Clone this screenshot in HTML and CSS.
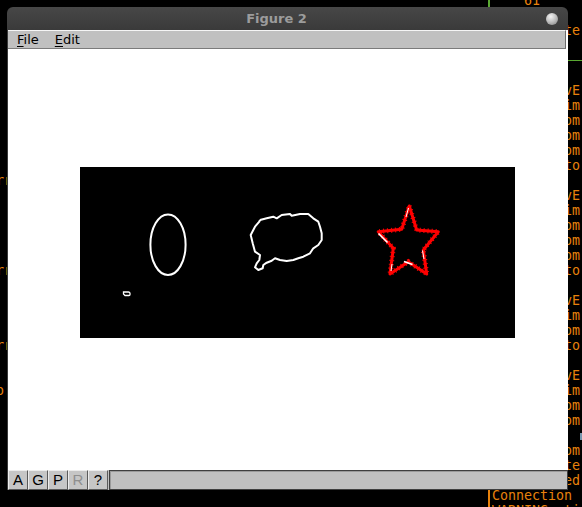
FILE: index.html
```html
<!DOCTYPE html>
<html>
<head>
<meta charset="utf-8">
<link rel="stylesheet" href="styles.css">
</head>
<body>
<div class="desktop">
  <div class="terminal">
<pre class="pane pane-left">












rror: bad frame





rr  missing key




rr  skipped


o: done







</pre>
    <div class="divider"><span class="divider-active"></span><span class="divider-rest"></span></div>
<pre class="pane pane-right">    61

Elapsed: te 0.42s

<span class="rule">────────────────────────────────</span>

 Running vE mode
  loaded im #1
  read from image
  copy from buffer
  load from disk
  output to window

 Running vE mode
  loaded im #2
  read from image
  copy from buffer
  load from disk
  output to window

 Running vE mode
  loaded im #3
  read from image
  output to window

 Running vE mode
  loaded im #4
  read from image
  copy from buffer
           <span class="cursor-mark"></span>
  load from disk
Elapsed: te 0.40s
   Finished
Connection refused
WARNING: timeout
</pre>
  </div>

  <div class="window">
    <div class="titlebar">
      <span class="title">Figure 2</span>
      <span class="close"></span>
    </div>
    <div class="window-body">
      <div class="menubar">
        <span class="menu-item"><u>F</u>ile</span>
        <span class="menu-item"><u>E</u>dit</span>
      </div>
      <div class="canvas">
        <svg class="figure" width="435" height="171" viewBox="0 0 435 171">
          <rect width="435" height="171" fill="#000"/>
          <ellipse cx="88" cy="77.7" rx="17.6" ry="30.3" fill="none" stroke="#fff" stroke-width="2"/>
          <path d="M43.5 125 h5 a1.5 1.5 0 0 1 1.5 1.5 v1 a1 1 0 0 1 -1 1 h-4 l-1.5 -1.5 z" fill="none" stroke="#fff" stroke-width="1.3"/>
          <polyline fill="none" stroke="#fff" stroke-width="2" stroke-linejoin="round" points="180,53 186.7,51.3 193.3,49.7 196.7,51.3 201.7,48 210,47 211.7,48.7 220,47 228.3,47 233.3,51.3 238.3,54.7 240,59.7 241.7,66.3 241.7,73 238.3,78 233.3,81.3 230,86.3 223.3,89.7 218.3,91.3 213.3,93 206.7,94 200,93 195,91.3 191.7,93.7 186.7,95.7 183.3,98 182.7,101.3 178.3,103 175,100.3 176.7,96.3 179.3,93 180,88 175,84.7 172.7,76.3 170.7,68 173.3,63 175,59.7 179.3,54.7 180,53"/>
          <polygon fill="none" stroke="#ff0000" stroke-width="3" stroke-linejoin="round" points="329.3,39 336.7,63 358.3,64.7 343.3,83 346.7,107 328.3,94.7 310,107 313.3,81.3 298.3,64.7 321.7,62.3"/>
          <polygon fill="none" stroke="#ff0000" stroke-width="5" stroke-dasharray="1 3" points="329.3,39 336.7,63 358.3,64.7 343.3,83 346.7,107 328.3,94.7 310,107 313.3,81.3 298.3,64.7 321.7,62.3"/>
          <line x1="298.5" y1="66.5" x2="307.5" y2="75.5" stroke="#fff" stroke-width="1.6"/>
          <line x1="324" y1="94.5" x2="332.5" y2="97.5" stroke="#fff" stroke-width="1.6"/>
          <line x1="328.5" y1="41" x2="326" y2="50" stroke="#fff" stroke-width="1"/>
          <line x1="342.5" y1="83.5" x2="344" y2="92" stroke="#fff" stroke-width="1"/>
          <line x1="311" y1="104" x2="312" y2="97" stroke="#fff" stroke-width="1"/>
        </svg>
      </div>
      <div class="toolbar">
        <span class="tbtn">A</span>
        <span class="tbtn">G</span>
        <span class="tbtn">P</span>
        <span class="tbtn disabled">R</span>
        <span class="tbtn">?</span>
        <span class="status"></span>
      </div>
    </div>
  </div>
</div>
</body>
</html>
```
FILE: styles.css
```css
* {
  box-sizing: border-box;
}

html,
body {
  margin: 0;
  width: 582px;
  height: 507px;
  overflow: hidden;
  background: #000;
}

.desktop {
  position: relative;
  width: 582px;
  height: 507px;
  overflow: hidden;
  background: #000;
}

/* terminal behind the window */
.terminal {
  display: flex;
  height: 520px;
  margin-top: -7px;
  margin-left: -4px;
  font-family: "DejaVu Sans Mono", monospace;
  font-size: 13.3px;
  line-height: 15px;
  color: #e8820c;
}

.pane {
  margin: 0;
  font: inherit;
  white-space: pre;
  overflow: hidden;
}

.pane-left {
  flex: none;
  width: 488px;
}

.divider {
  flex: none;
  width: 8px;
  display: flex;
  flex-direction: column;
  padding-left: 4px;
}

.divider-active {
  width: 2px;
  height: 497px;
  background: #5aa832;
}

.divider-rest {
  width: 2px;
  flex: 1;
  background: #e8820c;
}

.pane-right {
  flex: 1;
}

.rule {
  color: #5aa832;
}

.cursor-mark {
  display: inline-block;
  width: 2px;
  height: 7px;
  background: #7896ae;
}

/* the figure window */
.window {
  position: absolute;
  left: 7px;
  top: 7px;
  width: 561px;
  display: flex;
  flex-direction: column;
}

.titlebar {
  position: relative;
  height: 23px;
  border-radius: 6px 6px 0 0;
  background: linear-gradient(#474747, #3a3a3a);
  display: flex;
  align-items: center;
  justify-content: center;
  padding-right: 22px;
  font: bold 13px/23px "DejaVu Sans", sans-serif;
  color: #9c9c9c;
}

.close {
  position: absolute;
  right: 10px;
  top: 6px;
  width: 12px;
  height: 12px;
  border-radius: 50%;
  background: radial-gradient(circle at 40% 30%, #f4f4f4, #bdbdbd 50%, #7a7a7a);
}

.window-body {
  display: flex;
  flex-direction: column;
  border-left: 1px solid #3a3a3a;
  background: #fff;
}

.menubar {
  height: 19px;
  margin-right: 2px;
  display: flex;
  padding-left: 1px;
  background: #c0c0c0;
  border-top: 1px solid #f5f5f5;
  border-bottom: 1px solid #7b7b7b;
  border-right: 1px solid #6e6e6e;
  font: 13px/17px "DejaVu Sans", sans-serif;
  color: #000;
}

.menu-item {
  padding: 0 8px;
}

.menu-item u {
  text-underline-offset: 2px;
  text-decoration-thickness: 1px;
}

.canvas {
  height: 421px;
  padding: 118px 0 0 72px;
  background: #fff;
}

.figure {
  display: block;
}

.toolbar {
  height: 20px;
  display: flex;
  background: #c0c0c0;
}

.tbtn {
  flex: none;
  width: 20px;
  height: 20px;
  background: #c6c6c6;
  border: 1px solid;
  border-color: #ececec #5a5a5a #5a5a5a #ececec;
  font: 15px/18px "Liberation Sans", sans-serif;
  text-align: center;
  color: #000;
}

.tbtn.disabled {
  color: #8f8f8f;
}

.status {
  flex: 1;
  margin-left: 1px;
  background: #c0c0c0;
  border: 1px solid #3f3f3f;
  box-shadow: inset 1px 1px 0 #9a9a9a;
}
```
